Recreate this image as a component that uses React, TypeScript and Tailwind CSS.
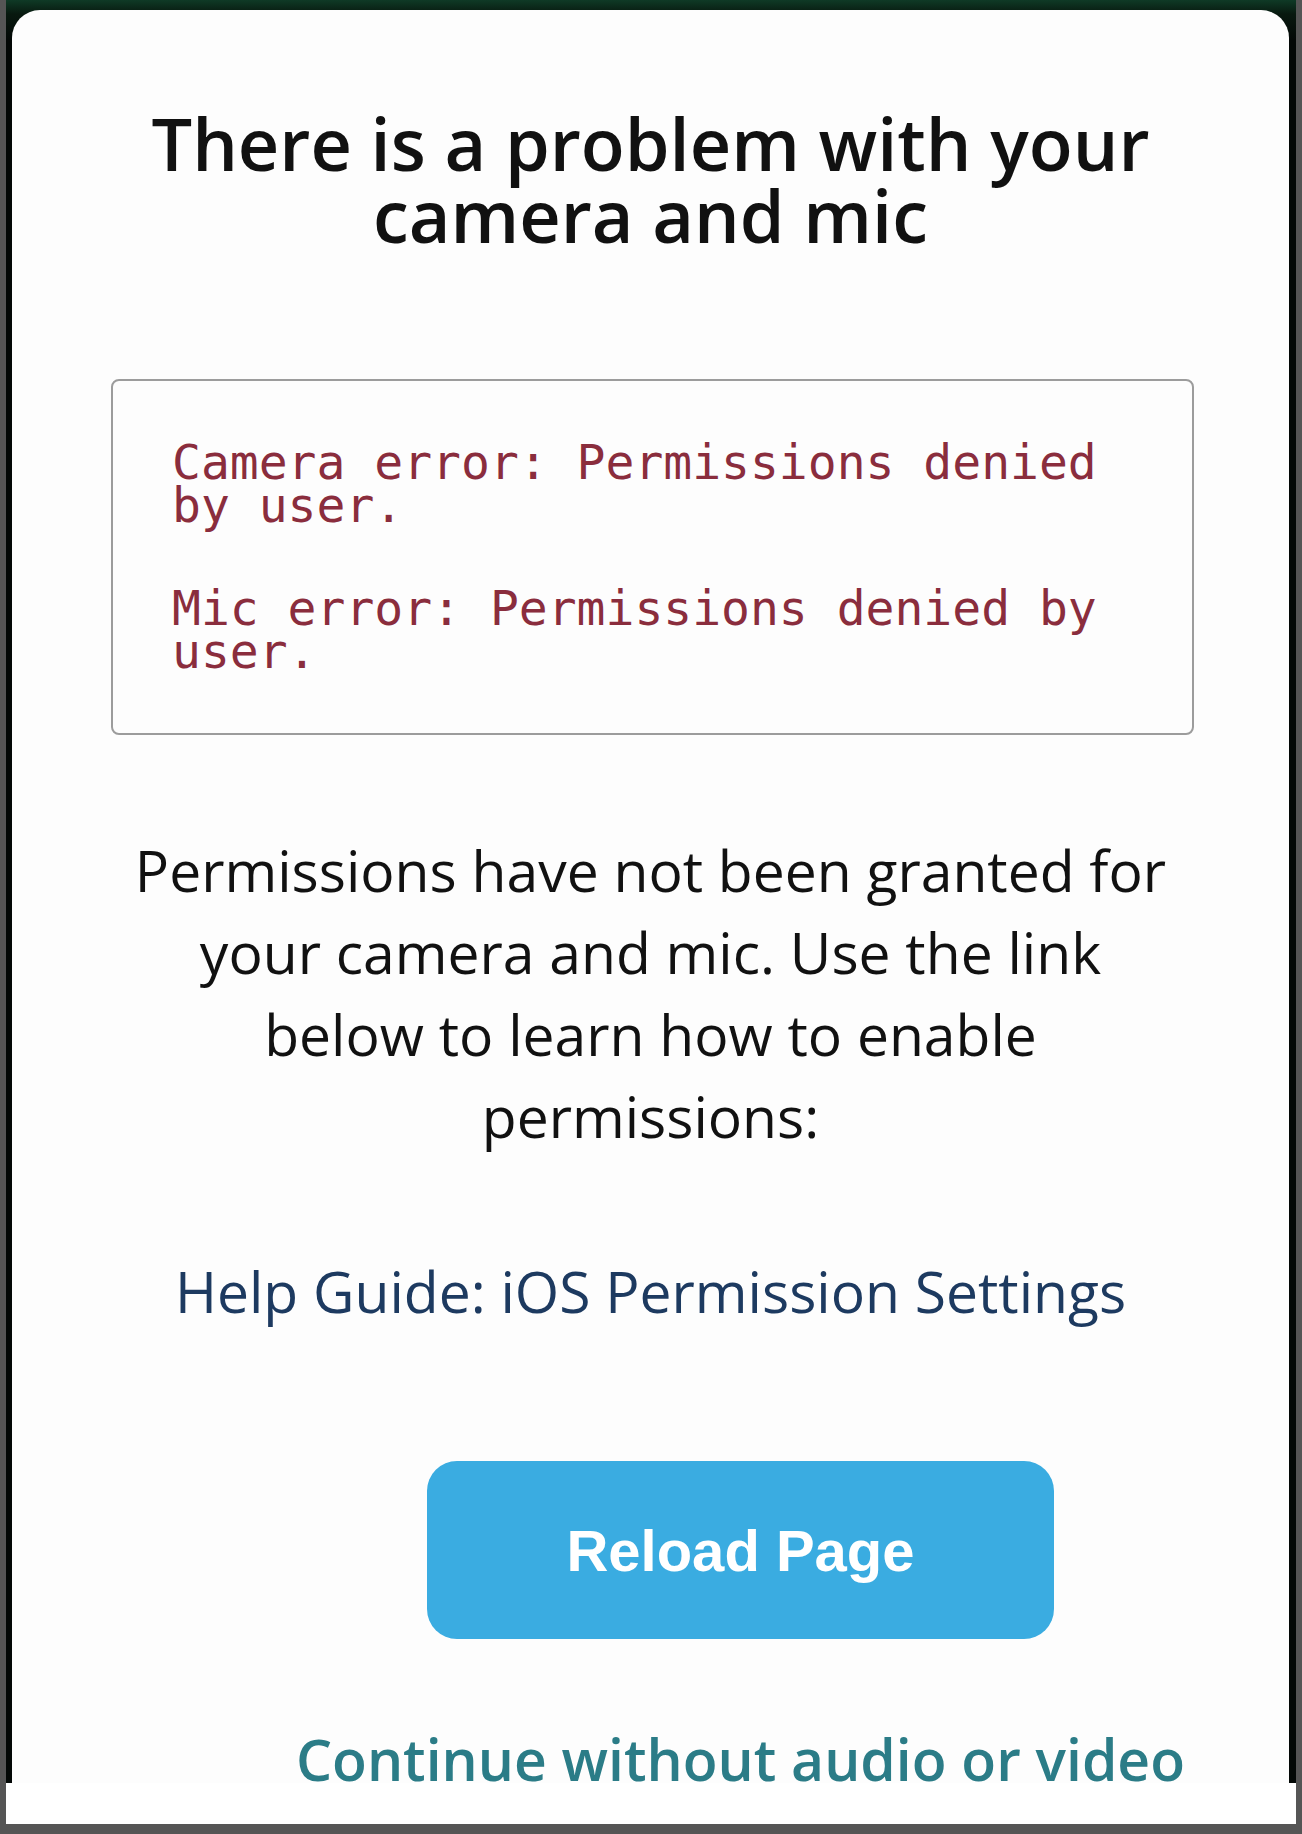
import React from 'react';

const App: React.FC = () => {
    return (
        <div className="w-[1302px] h-[1834px] bg-[#555555] px-[6px] pb-[10px] flex flex-col">
            {/* phone frame */}
            <div className="h-[1783px] pl-[6px] pr-[7px] pt-[10px] overflow-hidden bg-[linear-gradient(to_bottom,#0f3a26_0px,#08190f_14px,#030806_40px)]">
                <div className="h-full rounded-t-[28px] bg-[#fdfdfd] overflow-hidden font-['Open_Sans',sans-serif] text-[#111111]">
                    <h1 className="pt-[97px] text-center text-[72px] leading-[72px] font-semibold">
                        There is a problem with your
                        <br />
                        camera and mic
                    </h1>

                    <div className="mt-[128px] ml-[99px] mr-[95px] border-2 border-[#9c9c9c] rounded-[8px] pt-[60px] pb-[60px] pl-[59px] pr-[59px] font-['DejaVu_Sans_Mono',monospace] text-[48px] leading-[43px] text-[#8a2d3d]">
                        <p>Camera error: Permissions denied by user.</p>
                        <p className="mt-[60px]">Mic error: Permissions denied by user.</p>
                    </div>

                    <p className="mt-[94px] mx-auto w-[1045px] text-center text-[57px] leading-[82px]">
                        Permissions have not been granted for your camera and mic. Use the link below to learn how to enable permissions:
                    </p>

                    <div className="mt-[93px] text-center text-[57px] leading-[82px] text-[#1d3a60]">
                        <a href="#">Help Guide: iOS Permission Settings</a>
                    </div>

                    <div className="pl-[180px] flex flex-col items-center">
                        <button className="mt-[129px] w-[627px] h-[178px] rounded-[30px] bg-[#3aacE1] flex items-center justify-center font-['Liberation_Sans',sans-serif] font-bold text-[58px] text-white">
                            Reload Page
                        </button>
                        <a href="#" className="mt-[79px] text-[57px] leading-[82px] font-semibold text-[#2b7c87] whitespace-nowrap">
                            Continue without audio or video
                        </a>
                    </div>
                </div>
            </div>
            <div className="h-[41px] bg-white" />
        </div>
    );
};

export default App;
